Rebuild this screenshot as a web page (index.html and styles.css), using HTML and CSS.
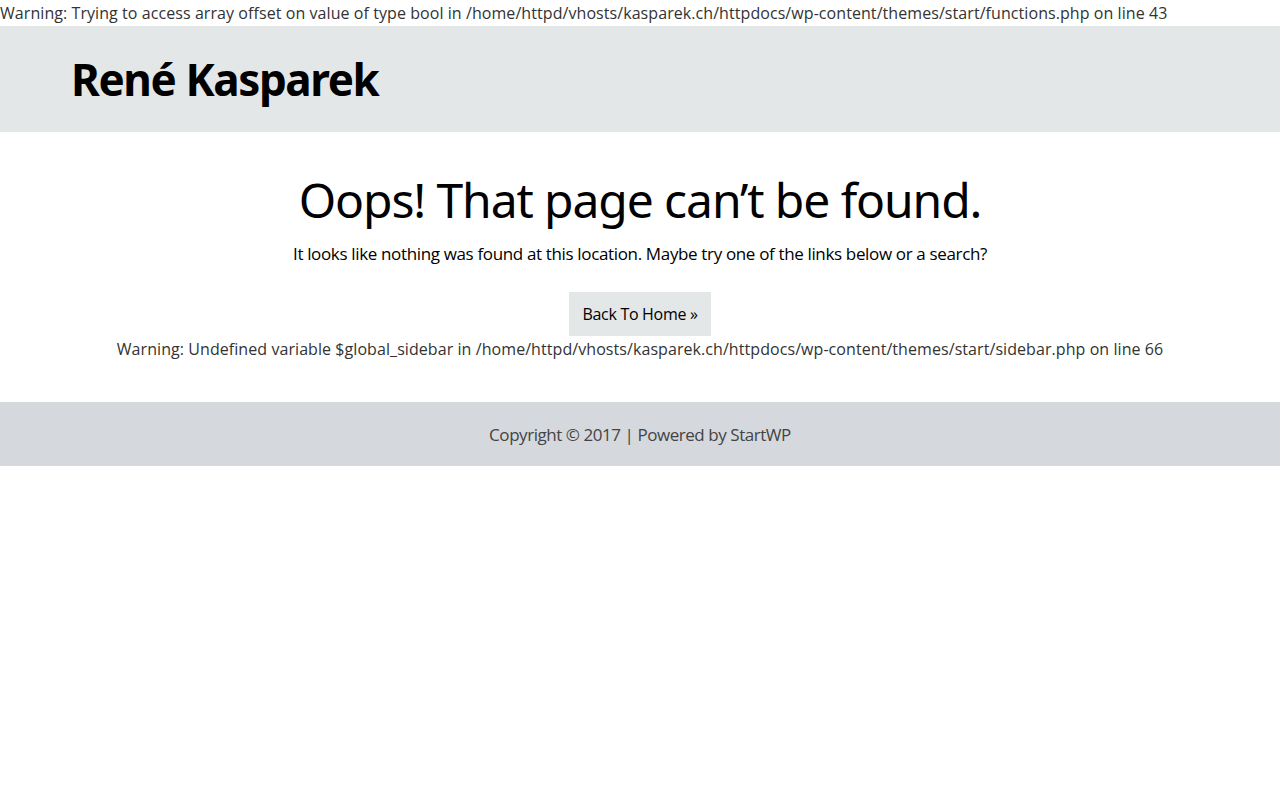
FILE: index.html
```html
<!DOCTYPE html>
<html lang="en">
<head>
<meta charset="utf-8">
<title>Page not found – René Kasparek</title>
<link rel="stylesheet" href="styles.css">
</head>
<body>
<div class="php-warning"><b class="lbl">Warning</b>: Trying to access array offset on value of type bool in <b class="lbl">/home/httpd/vhosts/kasparek.ch/httpdocs/wp-content/themes/start/functions.php</b> on line <b class="lbl">43</b></div>
<header class="site-header">
  <h1 class="site-title">René Kasparek</h1>
</header>
<main class="site-main">
  <h2 class="page-title">Oops! That page can’t be found.</h2>
  <p class="page-text">It looks like nothing was found at this location. Maybe try one of the links below or a search?</p>
  <a class="home-btn" href="#">Back To Home »</a>
  <div class="php-warning center"><b class="lbl">Warning</b>: Undefined variable $global_sidebar in <b class="lbl">/home/httpd/vhosts/kasparek.ch/httpdocs/wp-content/themes/start/sidebar.php</b> on line <b class="lbl">66</b></div>
</main>
<footer class="site-footer">Copyright © 2017 | Powered by StartWP</footer>
</body>
</html>
```
FILE: styles.css
```css
html, body {
  margin: 0;
  padding: 0;
  background: #fff;
}
body {
  font-family: "Open Sans", "Noto Sans", sans-serif;
  color: #000;
}
.lbl { font-weight: normal; }
.php-warning {
  font-size: 16px;
  line-height: 26px;
  color: #333;
  white-space: nowrap;
  letter-spacing: 0.07px;
}
.php-warning.center { text-align: center; }
.site-header {
  background: #e4e7e8;
  height: 106px;
  display: flex;
  align-items: center;
  padding-left: 71px;
}
.site-title {
  margin: 0;
  font-family: "Noto Sans", "Open Sans", sans-serif;
  font-size: 44px;
  font-weight: 700;
  letter-spacing: -1.4px;
  color: #000;
}
.site-main {
  display: flex;
  flex-direction: column;
  align-items: center;
  padding: 40px 0 40px;
}
.page-title {
  margin: 0;
  font-family: "Noto Sans", "Open Sans", sans-serif;
  font-weight: 400;
  font-size: 48px;
  line-height: 56px;
  letter-spacing: -1.1px;
}
.page-text {
  margin: 14px 0 26px;
  font-size: 17px;
  line-height: 24px;
  letter-spacing: -0.35px;
}
.home-btn {
  display: block;
  background: #e4e7e8;
  color: #000;
  text-decoration: none;
  font-size: 16px;
  padding: 0 13px;
  line-height: 44px;
  letter-spacing: -0.3px;
}
.site-footer {
  background: #d5d8dd;
  height: 64px;
  display: flex;
  align-items: center;
  justify-content: center;
  font-size: 17px;
  color: #444;
  letter-spacing: -0.45px;
}
```
